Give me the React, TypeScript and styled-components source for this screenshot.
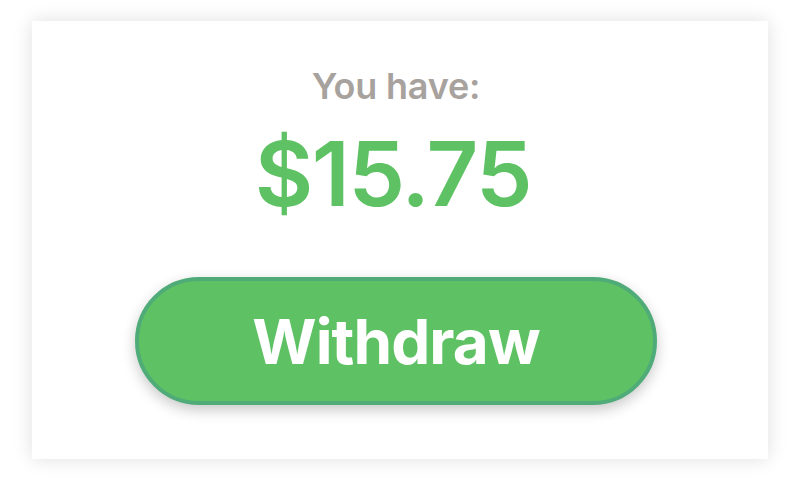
import React from "react";
import styled, { createGlobalStyle } from "styled-components";

const Global = createGlobalStyle`
  html, body { margin: 0; padding: 0; background: #ffffff; }
  body { width: 800px; height: 480px; overflow: hidden; font-family: Inter, "Noto Sans", sans-serif; }
`;

const Page = styled.div`
  width: 800px;
  height: 480px;
  box-sizing: border-box;
  padding: 21px 32px;
  display: flex;
`;

const Card = styled.div`
  flex: 1;
  background: #ffffff;
  box-shadow: 0 0 18px rgba(0, 0, 0, 0.13);
  display: flex;
  flex-direction: column;
  align-items: center;
  padding: 47px 8px 0 0;
  box-sizing: border-box;
`;

const Label = styled.div`
  font-size: 36px;
  line-height: 36px;
  font-weight: 600;
  color: #a8a29e;
  letter-spacing: -0.2px;
`;

const Amount = styled.div`
  margin-top: 25px;
  margin-right: 6px;
  font-size: 90px;
  line-height: 90px;
  font-weight: 600;
  color: #5ec264;
  letter-spacing: -1.5px;
`;

const WithdrawButton = styled.button`
  margin-top: 58px;
  width: 522px;
  height: 128px;
  box-sizing: border-box;
  border: 4px solid #4fab78;
  border-radius: 64px;
  background: #5ec264;
  color: #ffffff;
  font-family: Inter, "Noto Sans", sans-serif;
  font-size: 62px;
  font-weight: 700;
  letter-spacing: -0.9px;
  box-shadow: 0 5px 14px rgba(0, 0, 0, 0.22);
  cursor: pointer;
  display: flex;
  align-items: center;
  justify-content: center;
  padding: 0;
`;

export default function App() {
  return (
    <>
      <Global />
      <Page>
        <Card>
          <Label>You have:</Label>
          <Amount>$15.75</Amount>
          <WithdrawButton>Withdraw</WithdrawButton>
        </Card>
      </Page>
    </>
  );
}
